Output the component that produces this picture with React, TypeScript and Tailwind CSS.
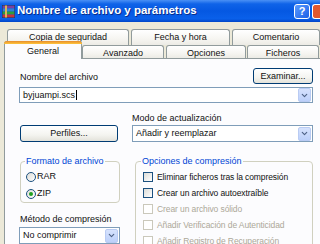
import { ChevronDown } from 'lucide-react';

function WinRarIcon() {
  return (
    <svg width="13" height="13" viewBox="0 0 13 13">
      <rect x="0.5" y="0.5" width="12" height="3" fill="#7b3fa0" />
      <rect x="0.5" y="3.5" width="12" height="3" fill="#2f7fd3" />
      <rect x="0.5" y="6.5" width="12" height="3" fill="#2e9e3a" />
      <rect x="0.5" y="9.5" width="12" height="3" fill="#c8323a" />
      <rect x="3" y="0" width="2" height="13" fill="#d9b45a" />
      <rect x="0" y="0" width="13" height="13" fill="none" stroke="#3a2a20" strokeWidth="0.8" />
    </svg>
  );
}

function XpButton({ label, className = '' }: { label: string; className?: string }) {
  return (
    <div
      className={`flex items-center justify-center border border-[#003c74] rounded-[3px] bg-[linear-gradient(180deg,#ffffff_0%,#f4f4f0_60%,#e3e2da_100%)] text-[9px] leading-[11px] text-[#111] ${className}`}
    >
      {label}
    </div>
  );
}

function ComboArrow() {
  return (
    <div className="flex h-[14px] w-[13px] items-center justify-center rounded-[2px] border border-[#b9cbf3] bg-[linear-gradient(180deg,#d6e2fd_0%,#bcd0fa_100%)]">
      <ChevronDown size={9} strokeWidth={3} className="text-[#4d6185]" />
    </div>
  );
}

function Combo({ value, className = '', caret = false }: { value: string; className?: string; caret?: boolean }) {
  return (
    <div className={`flex items-center border border-[#7f9db9] bg-white pl-[3px] pr-px ${className}`}>
      <span className="flex flex-1 items-center text-[9px] leading-[11px] text-[#111]">
        {value}
        {caret && <span className="ml-px inline-block h-[10px] w-px bg-black" />}
      </span>
      <ComboArrow />
    </div>
  );
}

function Checkbox({ label, disabled = false }: { label: string; disabled?: boolean }) {
  return (
    <div className="flex h-[16px] items-center">
      <div
        className={`h-[10px] w-[10px] border ${
          disabled ? 'border-[#cac8bb] bg-white' : 'border-[#1c5180] bg-[linear-gradient(135deg,#dcdcd7_0%,#ffffff_100%)]'
        }`}
      />
      <span
        className={`ml-[4px] text-[8.5px] leading-[11px] tracking-[-0.1px] ${disabled ? 'text-[#aca899]' : 'text-[#111]'}`}
      >
        {label}
      </span>
    </div>
  );
}

function Radio({ label, checked = false }: { label: string; checked?: boolean }) {
  return (
    <div className="flex h-[17px] items-center">
      <div className="flex h-[10px] w-[10px] items-center justify-center rounded-full border border-[#1c5180] bg-[linear-gradient(135deg,#dcdcd7_0%,#ffffff_100%)]">
        {checked && <div className="h-[4px] w-[4px] rounded-full bg-[#21a121]" />}
      </div>
      <span className="ml-[1px] text-[9px] leading-[11px] text-[#111]">{label}</span>
    </div>
  );
}

function Tab({ label, width, className = '' }: { label: string; width: string; className?: string }) {
  return (
    <div
      className={`flex items-start justify-center rounded-t-[3px] border border-b-0 border-[#919b9c] bg-[linear-gradient(180deg,#ffffff_0%,#f6f5f1_60%,#ecebe5_100%)] pt-[2px] text-[9px] leading-[11px] text-[#111] ${width} ${className}`}
    >
      {label}
    </div>
  );
}

export default function App() {
  return (
    <div className="h-[244px] w-[320px] overflow-hidden bg-[#ece9d8] font-['Liberation_Sans',Arial,sans-serif]">
      {/* title bar */}
      <div className="flex h-[22px] items-center bg-[linear-gradient(180deg,#4a90f5_0%,#0f63e8_18%,#0558e2_50%,#0a60ea_85%,#0046c8_100%)] pl-[2px]">
        <WinRarIcon />
        <span className="ml-[2px] flex-1 text-[11.5px] font-bold text-white [text-shadow:1px_1px_0_#0a2d8a]">
          Nombre de archivo y parámetros
        </span>
        <div className="flex h-[15px] w-[16px] items-center justify-center rounded-[3px] border border-white bg-[linear-gradient(135deg,#5a9bff_0%,#1c5fe6_100%)] text-[11px] font-bold leading-none text-white">
          ?
        </div>
        <div className="ml-[2px] h-[15px] w-[8px] rounded-l-[3px] border border-r-0 border-white bg-[#e2582f]" />
      </div>

      {/* tabs */}
      <div className="mt-[7px]">
        <div className="flex h-[16px] pl-[7px]">
          <Tab label="Copia de seguridad" width="w-[122px]" />
          <Tab label="Fecha y hora" width="w-[99px]" className="ml-[2px]" />
          <Tab label="Comentario" width="w-[88px]" className="ml-[2px]" />
        </div>
        <div className="flex h-[13px] items-end pl-[4px]">
          <div className="relative z-10 -mb-px flex h-[18px] w-[78px] flex-col rounded-t-[3px] border border-b-0 border-[#919b9c] bg-[#fcfcfe]">
            <div className="-mx-px -mt-px h-[3px] rounded-t-[3px] bg-[linear-gradient(180deg,#e68b2c_0%,#ffc73c_100%)]" />
            <div className="pt-[2px] text-center text-[9px] leading-[11px] text-[#111]">General</div>
          </div>
          <Tab label="Avanzado" width="w-[82px]" className="h-[13px]" />
          <Tab label="Opciones" width="w-[80px]" className="ml-[2px] h-[13px]" />
          <Tab label="Ficheros" width="w-[72px]" className="ml-px h-[13px]" />
        </div>
      </div>

      {/* panel */}
      <div className="ml-[4px] h-[200px] border-l border-t border-[#919b9c] bg-[#fcfcfe] pl-[14px] pr-[7px] pt-[9px]">
        <div className="flex items-end justify-between">
          <span className="mb-px pl-px text-[9px] leading-[11px] text-[#111]">Nombre del archivo</span>
          <XpButton label="Examinar..." className="h-[16px] w-[60px]" />
        </div>
        <Combo value="byjuampi.scs" caret className="mt-[3px] h-[16px]" />

        <div className="mt-[10px] flex items-end">
          <XpButton label="Perfiles..." className="ml-px h-[17px] w-[98px]" />
          <div className="ml-[14px] flex-1">
            <div className="text-[9px] leading-[11px] text-[#111]">Modo de actualización</div>
            <Combo value="Añadir y reemplazar" className="mt-px h-[17px]" />
          </div>
        </div>

        <div className="mt-[14px] flex items-start">
          <div className="w-[101px]">
            <fieldset className="ml-px h-[47px] rounded-[4px] border border-[#d0d0bf] pl-[5px]">
              <legend className="-ml-px px-px text-[9px] leading-[11px] text-[#0046d5]">Formato de archivo</legend>
              <div className="mt-px">
                <Radio label="RAR" />
                <Radio label="ZIP" checked />
              </div>
            </fieldset>
            <div className="mt-[11px] pl-px text-[9px] leading-[11px] text-[#111]">Método de compresión</div>
            <Combo value="No comprimir" className="mt-[2px] h-[17px]" />
          </div>
          <fieldset className="ml-[15px] h-[100px] flex-1 rounded-[4px] border border-[#d0d0bf] pl-[7px]">
            <legend className="-ml-[2px] px-px text-[9px] leading-[11px] text-[#0046d5]">Opciones de compresión</legend>
            <div className="mt-[2px]">
              <Checkbox label="Eliminar ficheros tras la compresión" />
              <Checkbox label="Crear un archivo autoextraíble" />
              <Checkbox label="Crear un archivo sólido" disabled />
              <Checkbox label="Añadir Verificación de Autenticidad" disabled />
              <Checkbox label="Añadir Registro de Recuperación" disabled />
            </div>
          </fieldset>
        </div>
      </div>
    </div>
  );
}
